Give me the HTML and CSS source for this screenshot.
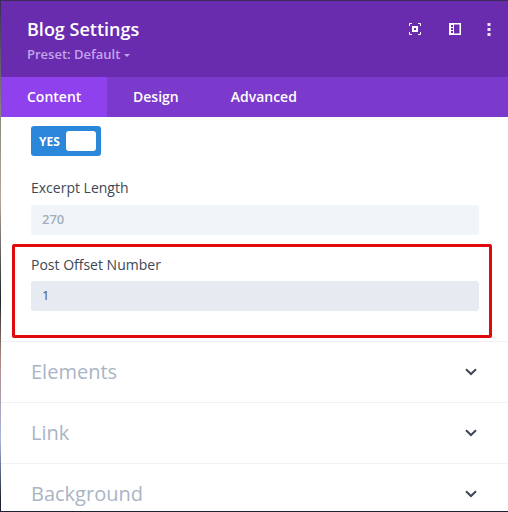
FILE: index.html
```html
<!DOCTYPE html>
<html lang="en">
<head>
<meta charset="utf-8">
<title>Blog Settings</title>
<link rel="stylesheet" href="styles.css">
</head>
<body>
<main class="panel">
  <header class="head">
    <div class="head-text">
      <h1 class="title">Blog Settings</h1>
      <div class="preset">Preset: Default <span class="caret"></span></div>
    </div>
    <div class="head-icons">
      <svg class="icon" viewBox="0 0 12 12" width="12" height="12"><path d="M.5 3V.5H3M9 .5h2.500V3M11.500 9v2.500H9M3 11.500H.5V9" fill="none" stroke="#fff"/><path fill-rule="evenodd" d="M3 3h6v6H3zM5 5v2h2V5z" fill="#fff"/></svg>
      <svg class="icon" viewBox="0 0 12 12" width="12" height="12"><path fill-rule="evenodd" d="M0 0h12v12H0zM5 1.500v9h5.500v-9zM2 2v2h2V2zM2 5v2h2V5zM2 8v2h2V8z" fill="#fff"/></svg>
      <svg class="icon" viewBox="0 0 4 13" width="4" height="13"><path d="M.5 0h3v3h-3zM.5 5h3v3h-3zM.5 10h3v3h-3z" fill="#f0e4fb"/></svg>
    </div>
  </header>
  <nav class="tabs">
    <a class="tab tab-active">Content</a>
    <a class="tab">Design</a>
    <a class="tab">Advanced</a>
  </nav>
  <section class="content">
    <div class="fields">
      <div class="toggle"><span class="toggle-yes">YES</span><span class="toggle-knob"></span></div>
      <div class="field field-excerpt">
        <label class="label">Excerpt Length</label>
        <div class="input input-muted">270</div>
      </div>
      <div class="field field-marked">
        <label class="label">Post Offset Number</label>
        <div class="input input-focus">1</div>
      </div>
    </div>
    <div class="group"><span class="group-name">Elements</span><svg class="chev" viewBox="0 0 12 8" width="12" height="8"><path d="M1 1.200l5 4.800 5-4.800" fill="none" stroke="#3e4754" stroke-width="2"/></svg></div>
    <div class="group"><span class="group-name">Link</span><svg class="chev" viewBox="0 0 12 8" width="12" height="8"><path d="M1 1.200l5 4.800 5-4.800" fill="none" stroke="#3e4754" stroke-width="2"/></svg></div>
    <div class="group"><span class="group-name">Background</span><svg class="chev" viewBox="0 0 12 8" width="12" height="8"><path d="M1 1.200l5 4.800 5-4.800" fill="none" stroke="#3e4754" stroke-width="2"/></svg></div>
  </section>
</main>
</body>
</html>
```
FILE: styles.css
```css
html, body {
  margin: 0;
  height: 512px;
  overflow: hidden;
}
body {
  background: linear-gradient(180deg, #3a2a58 0, #8c8a80 120px, #b5a79c 200px, #20262c 300px, #b08a84 360px, #a9b6e0 440px, #1d2230 500px);
  font-family: "Open Sans", sans-serif;
  padding: 1px 0 0 1px;
  box-sizing: border-box;
}
.panel {
  height: 510px;
  display: flex;
  flex-direction: column;
  background: #fff;
  overflow: hidden;
}
.head {
  height: 76px;
  flex: none;
  box-sizing: border-box;
  background: #6a2cae;
  display: flex;
  justify-content: space-between;
  padding: 17px 17px 0 26px;
}
.title {
  margin: 0;
  font-size: 18px;
  line-height: 22px;
  font-weight: 600;
  color: #fff;
}
.preset {
  margin-top: 6px;
  font-size: 13px;
  line-height: 16px;
  font-weight: 600;
  color: #c4a3ec;
}
.caret {
  display: inline-block;
  vertical-align: 2px;
  border: 3px solid transparent;
  border-top: 3px solid #c4a3ec;
  border-bottom: 0;
}
.head-icons {
  display: flex;
  align-items: flex-start;
  padding-top: 5px;
}
.icon { display: block; }
.icon + .icon { margin-left: 28px; }
.icon:last-child { margin-left: 26px; }
.tabs {
  height: 40px;
  flex: none;
  background: #7b3acb;
  display: flex;
}
.tab {
  font-size: 14px;
  font-weight: 600;
  line-height: 40px;
  color: #fff;
  padding: 0 26px;
}
.tab-active {
  background: #8e41ec;
  width: 54px;
}
.content {
  flex: 1;
  min-height: 0;
}
.fields {
  display: flow-root;
  height: 224px;
  box-sizing: border-box;
  padding: 9px 29px 0 30px;
}
.toggle {
  width: 70px;
  height: 30px;
  box-sizing: border-box;
  background: #2b87da;
  border-radius: 3px;
  display: flex;
  align-items: center;
  justify-content: space-between;
  padding: 0 5px 0 8px;
}
.toggle-yes {
  font-size: 12px;
  font-weight: 700;
  color: #fff;
}
.toggle-knob {
  width: 30px;
  height: 20px;
  border-radius: 3px;
  background: #fff;
}
.field-excerpt { margin-top: 22px; }
.field-marked {
  position: relative;
  margin-top: 20px;
}
.field-marked::after {
  content: "";
  position: absolute;
  left: -19px;
  right: -13px;
  top: -11px;
  height: 94px;
  box-sizing: border-box;
  border: 3px solid #e00a0c;
  border-radius: 2px;
}
.label {
  display: block;
  font-size: 14px;
  line-height: 20px;
  font-weight: 500;
  color: #3e4754;
}
.input {
  margin-top: 7px;
  height: 30px;
  box-sizing: border-box;
  padding: 0 11px;
  border-radius: 3px;
  font-size: 13px;
  line-height: 28px;
  font-weight: 600;
}
.field-marked .input { margin-top: 6px; }
.input-muted {
  background: #f1f5f9;
  color: #a3aebc;
}
.input-focus {
  background: #e6eaf1;
  color: #4a5260;
  font-weight: 500;
}
.group {
  height: 61px;
  box-sizing: border-box;
  border-top: 1px solid #eef1f5;
  display: flex;
  align-items: center;
  justify-content: space-between;
  padding: 0 30px;
  font-size: 20px;
  font-weight: 500;
  color: #a9b5c5;
}
.group-name { margin-top: -2px; }
.chev { margin-right: 1px; }
```
